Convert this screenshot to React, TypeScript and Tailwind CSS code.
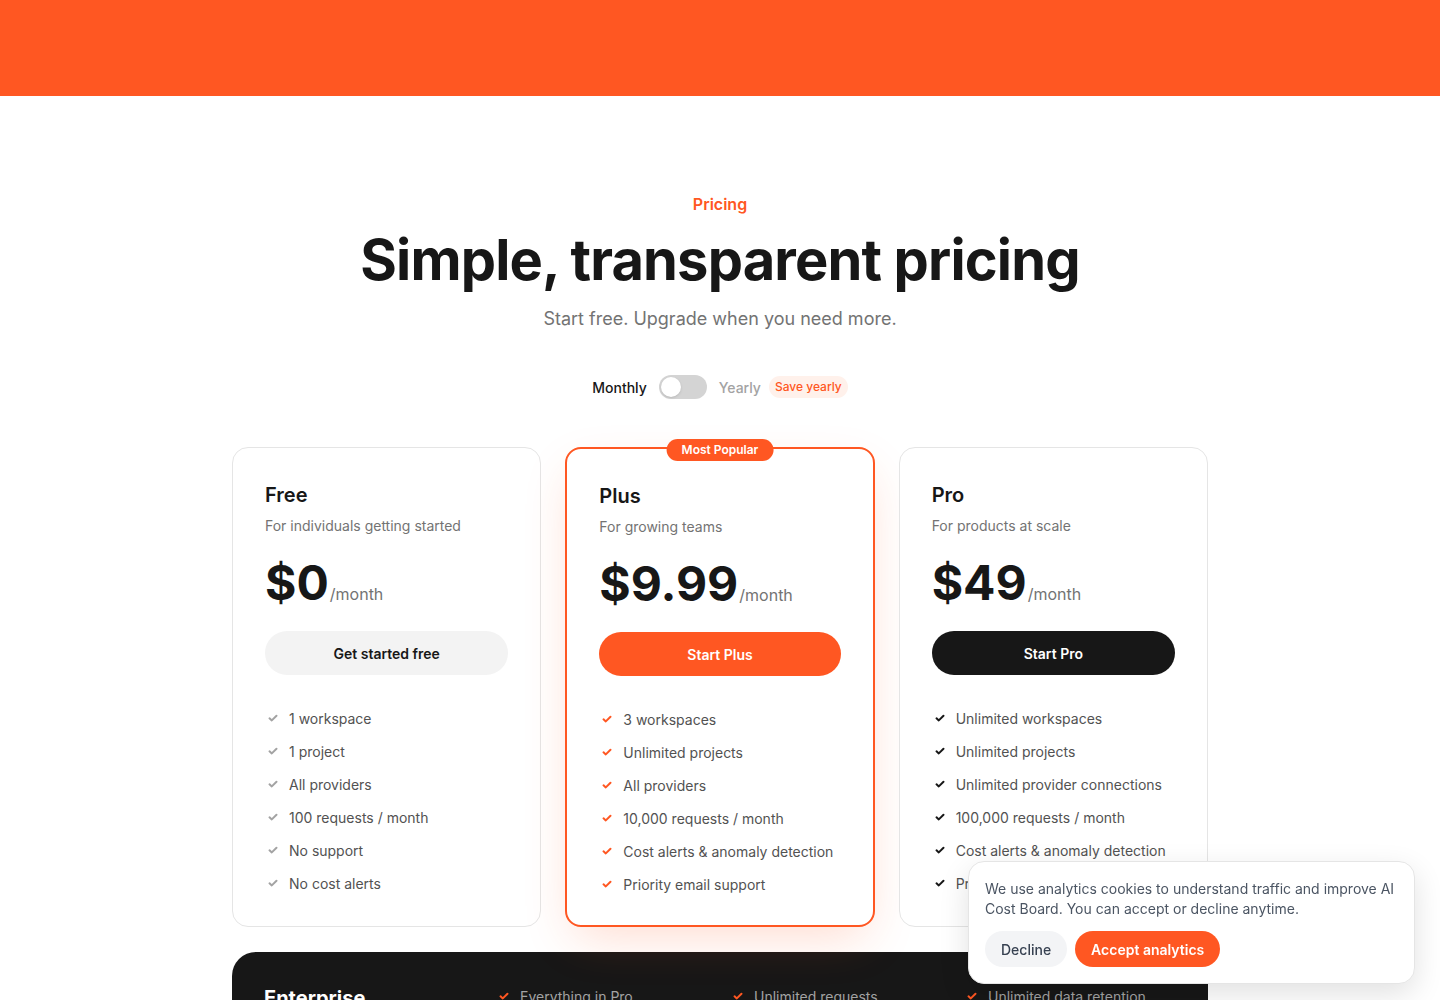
import React from "react";

type Plan = {
  name: string;
  tagline: string;
  price: string;
  cta: string;
  variant: "free" | "plus" | "pro";
  features: string[];
};

const plans: Plan[] = [
  {
    name: "Free",
    tagline: "For individuals getting started",
    price: "$0",
    cta: "Get started free",
    variant: "free",
    features: [
      "1 workspace",
      "1 project",
      "All providers",
      "100 requests / month",
      "No support",
      "No cost alerts",
    ],
  },
  {
    name: "Plus",
    tagline: "For growing teams",
    price: "$9.99",
    cta: "Start Plus",
    variant: "plus",
    features: [
      "3 workspaces",
      "Unlimited projects",
      "All providers",
      "10,000 requests / month",
      "Cost alerts & anomaly detection",
      "Priority email support",
    ],
  },
  {
    name: "Pro",
    tagline: "For products at scale",
    price: "$49",
    cta: "Start Pro",
    variant: "pro",
    features: [
      "Unlimited workspaces",
      "Unlimited projects",
      "Unlimited provider connections",
      "100,000 requests / month",
      "Cost alerts & anomaly detection",
      "Priority support",
    ],
  },
];

function Tick({ className }: { className: string }) {
  return (
    <svg
      viewBox="0 0 12 12"
      className={`h-3 w-3 shrink-0 ${className}`}
      fill="none"
      stroke="currentColor"
      strokeWidth={2}
      strokeLinecap="round"
      strokeLinejoin="round"
    >
      <path d="M2.5 6.3 4.8 8.4 9.5 3.8" />
    </svg>
  );
}

function PlanCard({ plan }: { plan: Plan }) {
  const isPlus = plan.variant === "plus";
  const tickColor =
    plan.variant === "free"
      ? "text-[#a3a3a3]"
      : plan.variant === "plus"
      ? "text-[#ff5722]"
      : "text-[#171717]";
  const buttonClass =
    plan.variant === "free"
      ? "bg-[#f3f3f3] text-[#171717]"
      : plan.variant === "plus"
      ? "bg-[#ff5722] text-white"
      : "bg-[#171717] text-white";

  return (
    <div
      className={`relative flex h-[480px] flex-col rounded-2xl bg-white px-8 pt-[33px] ${
        isPlus
          ? "border-2 border-[#ff5722] shadow-[0_18px_50px_-10px_rgba(255,87,34,0.22)]"
          : "border border-[#e5e5e5]"
      }`}
    >
      {isPlus && (
        <div className="absolute -top-[10px] left-1/2 flex h-[22px] -translate-x-1/2 items-center rounded-full bg-[#ff5722] px-[15px] text-[12px] font-semibold text-white">
          Most Popular
        </div>
      )}
      <h3 className="text-[20px] leading-7 font-semibold text-[#171717]">{plan.name}</h3>
      <p className="mt-[7px] text-[14px] leading-5 text-[#737373]">{plan.tagline}</p>
      <div className="mt-[23px] flex items-baseline">
        <span className="text-[48px] leading-none font-bold text-[#171717]">{plan.price}</span>
        <span className="ml-px text-[16px] text-[#737373]">/month</span>
      </div>
      <button
        className={`mt-6 h-11 w-full rounded-full text-[14px] font-semibold ${buttonClass}`}
      >
        {plan.cta}
      </button>
      <ul className="mt-[33px] flex flex-col gap-[13px]">
        {plan.features.map((f) => (
          <li key={f} className="flex h-5 items-center gap-[10px] pl-[2px] text-[14px] text-[#525252]">
            <Tick className={tickColor} />
            <span>{f}</span>
          </li>
        ))}
      </ul>
    </div>
  );
}

export default function App() {
  return (
    <div
      className="min-h-screen bg-white"
      style={{ fontFamily: "Inter, 'Noto Sans', sans-serif" }}
    >
      <header className="h-24 bg-[#ff5722]" />

      <section className="mx-auto w-[976px] pt-24 pb-24">
        <div className="flex flex-col items-center text-center">
          <p className="text-[16px] leading-6 font-semibold text-[#ff5722]">Pricing</p>
          <h1 className="mt-4 text-[56px] leading-none font-bold tracking-[-0.015em] text-[#171717]">
            Simple, transparent pricing
          </h1>
          <p className="mt-[17px] text-[18px] leading-7 text-[#737373]">
            Start free. Upgrade when you need more.
          </p>

          <div className="mt-[42px] flex h-6 items-center">
            <span className="text-[14px] font-medium text-[#171717]">Monthly</span>
            <div className="ml-3 flex h-6 w-12 items-center rounded-full bg-[#d4d4d4] p-[2px]">
              <div className="h-5 w-5 rounded-full bg-white shadow-sm" />
            </div>
            <span className="ml-3 text-[14px] font-medium text-[#a3a3a3]">Yearly</span>
            <span className="ml-2 rounded-full bg-[#fff1eb] px-1.5 py-0.5 text-[12px] font-medium text-[#ff5722]">
              Save yearly
            </span>
          </div>
        </div>

        <div className="mt-12 grid grid-cols-3 gap-6">
          {plans.map((p) => (
            <PlanCard key={p.name} plan={p} />
          ))}
        </div>

        <div className="mt-[25px] rounded-3xl bg-[#171717] px-8 pt-8 pb-8">
          <div className="grid grid-cols-4 gap-6">
            <div>
              <h3 className="text-[20px] leading-7 font-bold text-white">Enterprise</h3>
              <p className="mt-2 text-[14px] leading-5 text-[#a3a3a3]">
                Custom limits, SSO and dedicated support for large organizations.
              </p>
              <button className="mt-6 h-11 rounded-full bg-white px-6 text-[14px] font-semibold text-[#171717]">
                Contact sales
              </button>
            </div>
            {[
              ["Everything in Pro", "SSO & SAML", "Audit logs"],
              ["Unlimited requests", "Custom integrations", "Dedicated manager"],
              ["Unlimited data retention", "99.9% uptime SLA", "Invoice billing"],
            ].map((col, i) => (
              <ul key={i} className="flex flex-col gap-[13px] pt-[2px]">
                {col.map((f) => (
                  <li key={f} className="flex h-5 items-center gap-[10px] text-[14px] text-[#a3a3a3]">
                    <Tick className="text-[#ff5722]" />
                    <span>{f}</span>
                  </li>
                ))}
              </ul>
            ))}
          </div>
        </div>
      </section>

      <div className="fixed right-[25px] bottom-4 w-[447px] rounded-2xl border border-[#e5e5e5] bg-white px-4 pt-[17px] pb-4 shadow-[0_10px_30px_rgba(0,0,0,0.12)]">
        <p className="text-[14px] leading-5 text-[#4b5563]">
          We use analytics cookies to understand traffic and improve AI Cost Board. You can
          accept or decline anytime.
        </p>
        <div className="mt-3 flex gap-2">
          <button className="h-9 rounded-full bg-[#f3f4f6] px-4 text-[14px] font-medium text-[#374151]">
            Decline
          </button>
          <button className="h-9 rounded-full bg-[#ff5722] px-4 text-[14px] font-semibold text-white">
            Accept analytics
          </button>
        </div>
      </div>
    </div>
  );
}
